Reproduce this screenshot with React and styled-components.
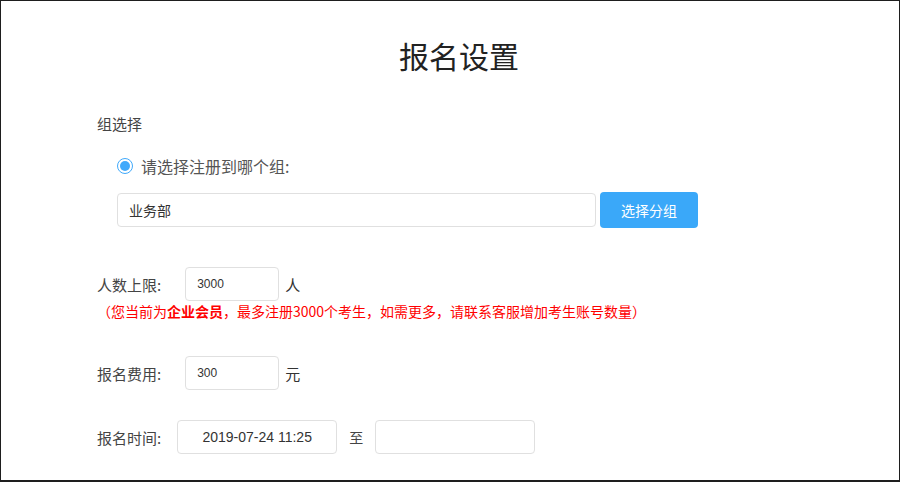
import React from 'react';
import styled, { createGlobalStyle } from 'styled-components';

const GlobalStyle = createGlobalStyle`
  html, body {
    margin: 0;
    padding: 0;
    background: #fff;
  }
  body {
    font-family: "Noto Sans CJK SC", "Liberation Sans", sans-serif;
    color: #333;
  }
`;

const Frame = styled.div`
  width: 900px;
  height: 482px;
  box-sizing: border-box;
  border: 1px solid #1e1e1e;
  border-bottom-width: 2px;
  overflow: hidden;
`;

const Title = styled.h1`
  margin: 34px 0 0 18px;
  font-size: 30px;
  line-height: 40px;
  font-weight: 400;
  text-align: center;
  color: #222;
`;

const Form = styled.div`
  padding-left: 96px;
`;

const SectionLabel = styled.div`
  margin-top: 39px;
  font-size: 15px;
  line-height: 20px;
  color: #444;
`;

const RadioRow = styled.label`
  display: flex;
  align-items: center;
  margin-top: 22px;
  padding-left: 20px;
  font-size: 16px;
  line-height: 20px;
  color: #555;
`;

const RadioDot = styled.span`
  width: 16px;
  height: 16px;
  box-sizing: border-box;
  border-radius: 50%;
  border: 1.5px solid #40a9fb;
  display: inline-flex;
  align-items: center;
  justify-content: center;
  margin-right: 8px;
  &::after {
    content: '';
    width: 10px;
    height: 10px;
    border-radius: 50%;
    background: #40a9fb;
  }
`;

const GroupRow = styled.div`
  display: flex;
  align-items: center;
  margin-top: 16px;
  padding-left: 20px;
  gap: 4px;
`;

const TextBox = styled.div`
  width: ${p => p.$w}px;
  height: 34px;
  box-sizing: border-box;
  border: 1px solid #e0e0e0;
  border-radius: 4px;
  display: flex;
  align-items: center;
  justify-content: ${p => (p.$center ? 'center' : 'flex-start')};
  padding: 0 ${p => (p.$center ? 0 : 11)}px;
  font-family: ${p => (p.$num ? '"Liberation Sans", Arial, sans-serif' : 'inherit')};
  font-size: ${p => p.$size || 14}px;
  color: #333;
  background: #fff;
`;

const Button = styled.button`
  width: 98px;
  height: 36px;
  border: none;
  border-radius: 4px;
  background: #3aa8f9;
  color: #fff;
  font-family: inherit;
  font-size: 14px;
  cursor: pointer;
`;

const FieldRow = styled.div`
  display: flex;
  align-items: center;
  margin-top: ${p => p.$top}px;
  font-size: 15px;
  color: #444;
`;

const FieldLabel = styled.span`
  margin-right: ${p => p.$gap}px;
  white-space: nowrap;
`;

const Unit = styled.span`
  margin-left: 6px;
  font-size: 15px;
  color: #333;
`;

const Sep = styled.span`
  margin: 0 12px;
  font-size: 14px;
  color: #444;
`;

const Note = styled.div`
  margin-top: 1px;
  font-size: 14px;
  line-height: 18px;
  color: #f00;
  b {
    font-weight: 700;
  }
`;

export default function App() {
  return (
    <>
      <GlobalStyle />
      <Frame>
        <Title>报名设置</Title>
        <Form>
          <SectionLabel>组选择</SectionLabel>
          <RadioRow>
            <RadioDot />
            请选择注册到哪个组:
          </RadioRow>
          <GroupRow>
            <TextBox $w={479}>业务部</TextBox>
            <Button>选择分组</Button>
          </GroupRow>

          <FieldRow $top={39}>
            <FieldLabel $gap={24}>人数上限:</FieldLabel>
            <TextBox $w={94} $num $size={12}>3000</TextBox>
            <Unit>人</Unit>
          </FieldRow>
          <Note>
            （您当前为<b>企业会员</b>，最多注册3000个考生，如需更多，请联系客服增加考生账号数量）
          </Note>

          <FieldRow $top={36}>
            <FieldLabel $gap={24}>报名费用:</FieldLabel>
            <TextBox $w={94} $num $size={12}>300</TextBox>
            <Unit>元</Unit>
          </FieldRow>

          <FieldRow $top={30}>
            <FieldLabel $gap={16}>报名时间:</FieldLabel>
            <TextBox $w={160} $num $center>2019-07-24 11:25</TextBox>
            <Sep>至</Sep>
            <TextBox $w={160} />
          </FieldRow>
        </Form>
      </Frame>
    </>
  );
}
